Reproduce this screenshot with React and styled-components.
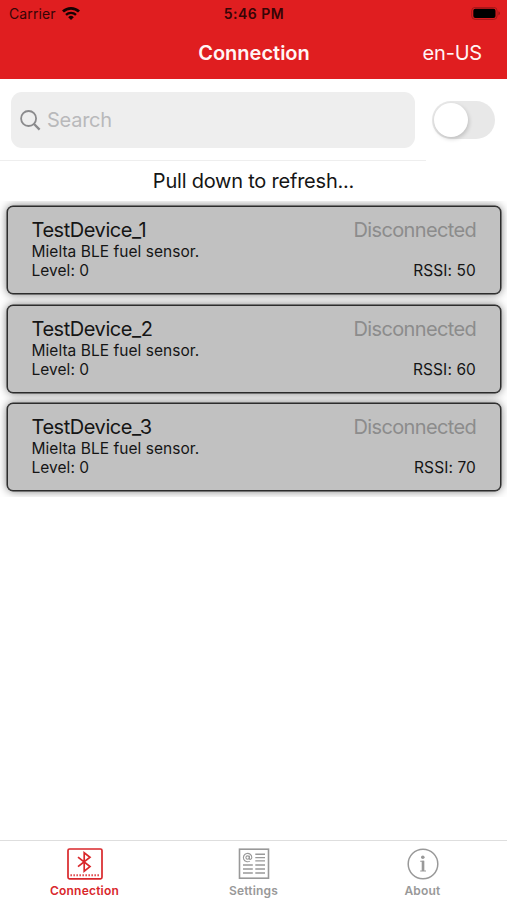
import styled, { createGlobalStyle } from "styled-components";

const devices = [
  { name: "TestDevice_1", rssi: 50 },
  { name: "TestDevice_2", rssi: 60 },
  { name: "TestDevice_3", rssi: 70 },
];

export default function App() {
  return (
    <>
      <GlobalStyle />
      <Screen>
        <Header>
          <StatusBar>
            <Carrier>
              <span>Carrier</span>
              <WifiIcon />
            </Carrier>
            <Time>5:46 PM</Time>
            <BatteryIcon />
          </StatusBar>
          <NavBar>
            <Title>Connection</Title>
            <Language>en-US</Language>
          </NavBar>
        </Header>

        <SearchRow>
          <SearchArea>
            <SearchField>
              <SearchIcon />
              <Placeholder>Search</Placeholder>
            </SearchField>
          </SearchArea>
          <Toggle>
            <Knob />
          </Toggle>
        </SearchRow>

        <RefreshHint>Pull down to refresh...</RefreshHint>

        <DeviceList>
          {devices.map((device) => (
            <DeviceCard key={device.name}>
              <CardLine>
                <DeviceName>{device.name}</DeviceName>
                <DeviceStatus>Disconnected</DeviceStatus>
              </CardLine>
              <Detail>Mielta BLE fuel sensor.</Detail>
              <CardLine>
                <Detail>Level: 0</Detail>
                <Detail $spacing="0.1px">RSSI: {device.rssi}</Detail>
              </CardLine>
            </DeviceCard>
          ))}
        </DeviceList>

        <TabBar>
          <Tab $active>
            <BluetoothIcon />
            <TabLabel>Connection</TabLabel>
          </Tab>
          <Tab>
            <SettingsIcon />
            <TabLabel>Settings</TabLabel>
          </Tab>
          <Tab>
            <AboutIcon />
            <TabLabel>About</TabLabel>
          </Tab>
        </TabBar>
      </Screen>
    </>
  );
}

function WifiIcon() {
  return (
    <svg width="18" height="14" viewBox="0 0 18 14" fill="none" stroke="currentColor">
      <path d="M1 4.6a11.6 11.6 0 0 1 16 0" strokeWidth="2.8" />
      <path d="M4 7.9a7.3 7.3 0 0 1 10 0" strokeWidth="2.4" />
      <path d="M9 13 6.2 10.2a4 4 0 0 1 5.6 0z" fill="currentColor" stroke="none" />
    </svg>
  );
}

function BatteryIcon() {
  return (
    <svg width="30" height="14" viewBox="0 0 30 14">
      <rect x="0.7" y="0.4" width="25.4" height="12" rx="3.4" fill="none" stroke="#a31719" strokeWidth="1" />
      <rect x="2.3" y="1.8" width="22.2" height="9.2" rx="2" fill="#000" />
      <path d="M27.5 4.3v4.2c1.8-.7 1.8-3.5 0-4.2z" fill="#8d1315" />
    </svg>
  );
}

function SearchIcon() {
  return (
    <svg width="22" height="22" viewBox="0 0 22 22" fill="none" stroke="#8a8a8c" strokeWidth="1.8">
      <circle cx="8.6" cy="9.5" r="7.5" />
      <path d="m13.8 14.8 5.8 5.8" strokeWidth="2.3" />
    </svg>
  );
}

function BluetoothIcon() {
  return (
    <svg width="36" height="32" viewBox="0 0 36 32" fill="none" stroke="currentColor">
      <rect x="1" y="1" width="34" height="29.8" rx="1.5" strokeWidth="1.7" />
      <path d="m11 9.2 12 9.4-5.8 4.6V4.8l5.8 4.4-12 9.4" strokeWidth="1.7" />
      <path d="M3.5 27.3h30" strokeWidth="2" strokeDasharray="1.3 1.7" />
    </svg>
  );
}

function SettingsIcon() {
  return (
    <svg width="32" height="32" viewBox="0 0 32 32" fill="none" stroke="currentColor">
      <rect x="1.5" y="1.2" width="29" height="29" strokeWidth="1.6" />
      <circle cx="9.6" cy="9.6" r="1.7" strokeWidth="1.1" />
      <path d="M11.4 7.8v2.6c0 1.6 2.4 1.2 2.4-.9a4.2 4.2 0 1 0-1.9 3.6" strokeWidth="1.1" />
      <path
        d="M17.3 6.3h9.7M17.3 9.6h9.7M17.3 12.9h9.7M5 17h9.8M5 21h9.8M5 25h9.8M17.3 17h9.7M17.3 21h9.7M17.3 25h9.7"
        strokeWidth="1.4"
      />
    </svg>
  );
}

function AboutIcon() {
  return (
    <svg width="32" height="32" viewBox="0 0 32 32" fill="none" stroke="currentColor">
      <circle cx="16" cy="16" r="14.8" strokeWidth="1.5" />
      <circle cx="15.8" cy="9.2" r="1.8" fill="currentColor" stroke="none" />
      <path d="M13.2 13.2h3.3v9.4M13.2 23h5.8" strokeWidth="1.1" />
      <path d="M16 12.8V23" strokeWidth="2.6" />
    </svg>
  );
}

const GlobalStyle = createGlobalStyle`
  * {
    box-sizing: border-box;
  }
  body {
    margin: 0;
    background: #fff;
    font-family: Inter, "Liberation Sans", sans-serif;
    color: #151515;
  }
  svg {
    display: block;
    flex-shrink: 0;
  }
`;

const Screen = styled.div`
  display: flex;
  flex-direction: column;
  width: 507px;
  height: 900px;
  overflow: hidden;
  white-space: nowrap;
`;

const Header = styled.header`
  height: 79px;
  flex-shrink: 0;
  background: #e01e20;
`;

const StatusBar = styled.div`
  display: grid;
  grid-template-columns: 1fr auto 1fr;
  align-items: center;
  height: 27px;
  padding: 0 6px 0 9px;
  color: #350506;
  font-size: 14px;

  > :last-child {
    justify-self: end;
  }
`;

const Carrier = styled.div`
  display: flex;
  align-items: center;
  gap: 6px;
  letter-spacing: 0.1px;

  svg {
    color: #160202;
  }
`;

const Time = styled.div`
  margin-right: 2px;
  font-weight: 600;
  letter-spacing: 0.5px;
`;

const NavBar = styled.div`
  display: grid;
  grid-template-columns: 1fr auto 1fr;
  align-items: center;
  height: 51px;
  padding: 0 25px;
  color: #fff5f5;
  font-size: 20px;
`;

const Title = styled.h1`
  grid-column: 2;
  margin: 0 -0.5px 0 0.5px;
  font-size: 20px;
  font-weight: 600;
`;

const Language = styled.div`
  justify-self: end;
  letter-spacing: -0.2px;
`;

const SearchRow = styled.div`
  display: flex;
  height: 82px;
  flex-shrink: 0;
`;

const SearchArea = styled.div`
  width: 426px;
  padding: 12.5px 11px 0;
  border-bottom: 1px solid #eeeeee;
`;

const SearchField = styled.div`
  display: flex;
  align-items: center;
  gap: 5px;
  height: 56.5px;
  padding: 0 9px;
  border-radius: 11px;
  background: #eeeeee;
`;

const Placeholder = styled.span`
  color: #b9b9bb;
  font-size: 20px;
  letter-spacing: -0.25px;
`;

const Toggle = styled.div`
  width: 63px;
  height: 38px;
  margin: 22px 0 0 6px;
  padding: 2px;
  border-radius: 19px;
  background: #e8e8e8;
`;

const Knob = styled.div`
  width: 34px;
  height: 34px;
  border-radius: 50%;
  background: #fff;
  box-shadow: 1px 2px 4px rgba(0, 0, 0, 0.18);
`;

const RefreshHint = styled.div`
  height: 40px;
  flex-shrink: 0;
  line-height: 41px;
  text-align: center;
  font-size: 20px;
  letter-spacing: -0.22px;
`;

const DeviceList = styled.div`
  display: flex;
  flex-direction: column;
  gap: 10.5px;
  height: 296px;
  flex-shrink: 0;
  padding: 5px 6px 0 7px;
  overflow: hidden;
`;

const DeviceCard = styled.div`
  height: 88px;
  flex-shrink: 0;
  padding: 12px 24px 0 23.5px;
  border: 1px solid #2c2c2c;
  border-radius: 6px;
  background: #c1c1c1;
  box-shadow:
    0 0 0 0.5px #2c2c2c,
    0 0 10px rgba(0, 0, 0, 0.55);
`;

const CardLine = styled.div`
  display: flex;
  justify-content: space-between;
`;

const DeviceName = styled.div`
  font-size: 20px;
  line-height: 23px;
  letter-spacing: -0.45px;
`;

const DeviceStatus = styled(DeviceName)`
  color: #8c8c8c;
  letter-spacing: -0.65px;
`;

const Detail = styled.div`
  font-size: 15.5px;
  line-height: 19px;
  letter-spacing: ${(props) => props.$spacing || "0.04px"};
`;

const TabBar = styled.nav`
  display: grid;
  grid-template-columns: repeat(3, 1fr);
  height: 60px;
  margin-top: auto;
  border-top: 1px solid #dedede;
`;

const Tab = styled.div`
  display: flex;
  flex-direction: column;
  align-items: center;
  padding-top: 7px;
  color: ${(props) => (props.$active ? "#d9272b" : "#999999")};
`;

const TabLabel = styled.span`
  margin-top: 3px;
  font-size: 12px;
  font-weight: 600;
  line-height: 16px;
  letter-spacing: 0.2px;
`;
